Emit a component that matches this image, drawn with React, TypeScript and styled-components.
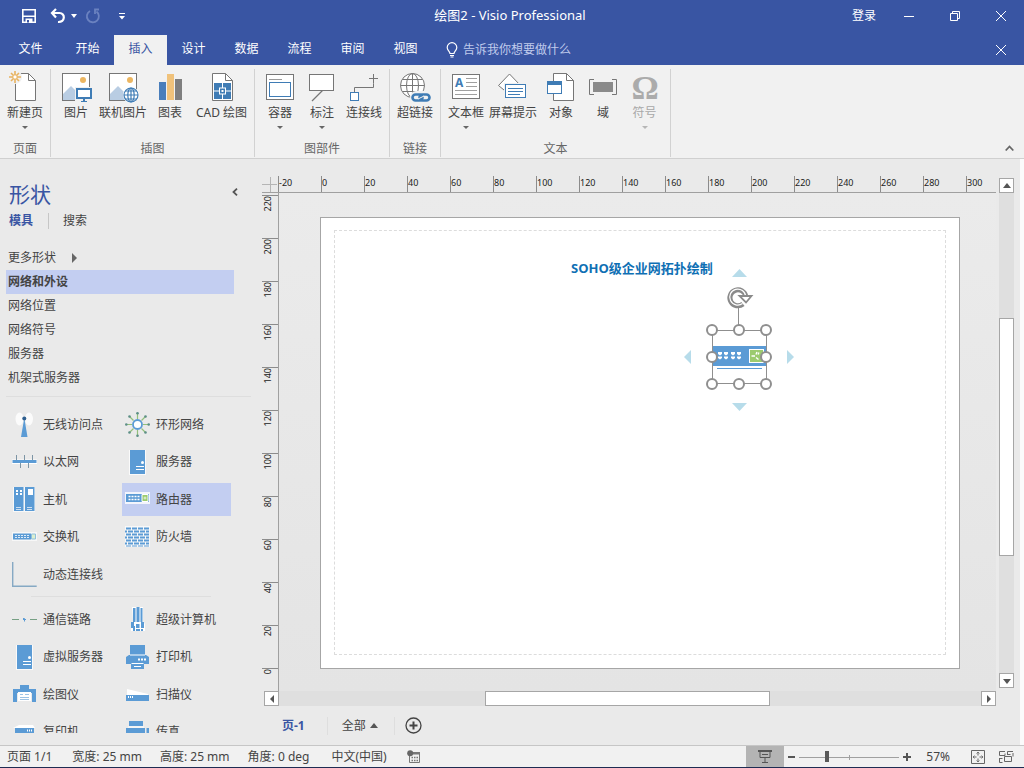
import React from "react";
import styled, { createGlobalStyle, css } from "styled-components";

const brand = "#3955a3";
const selected = "#c3cef1";
const steel = "#5b9bd5";
const outline = "#767676";
const accent = "#3f7cb5";

const GlobalStyle = createGlobalStyle`
  * { box-sizing: border-box; }
  body {
    margin: 0;
    font-family: "Noto Sans", "Noto Sans CJK SC", sans-serif;
    font-size: 12px;
    line-height: 16px;
    color: #444;
  }
  button, input {
    font: inherit;
    color: inherit;
    border: 0;
    padding: 0;
    margin: 0;
    background: none;
  }
  ul { list-style: none; margin: 0; padding: 0; }
  h1, h2 { margin: 0; font-weight: 400; }
  svg { display: block; flex: none; }
`;

const Shell = styled.div`
  display: flex;
  flex-direction: column;
  height: 100vh;
  overflow: hidden;
  background: #f1f1f1;
`;

/* ---------- title bar and tabs ---------- */

const TitleBar = styled.header`
  display: grid;
  grid-template-columns: 1fr auto 1fr;
  height: 35px;
  padding-bottom: 4px;
  background: ${brand};
  color: #fff;
  align-items: center;
`;

const QuickAccess = styled.div`
  display: flex;
  align-items: center;
  padding-left: 20px;
`;

const QuickButton = styled.button<{ $gap: number }>`
  display: flex;
  margin-right: ${(p) => p.$gap}px;
`;

const AppTitle = styled.h1`
  font-size: 13px;
  line-height: 16px;
  padding: 0 4px 2px 0;
`;

const WindowTools = styled.div`
  display: flex;
  justify-content: flex-end;
  align-items: center;
`;

const SignIn = styled.button`
  margin-right: 10px;
  line-height: 16px;
`;

const WindowButton = styled.button`
  width: 46px;
  height: 30px;
  display: flex;
  align-items: center;
  justify-content: center;
`;

const TabBar = styled.nav`
  display: flex;
  height: 30px;
  background: ${brand};
  color: #fff;
`;

const Tab = styled.button<{ $active?: boolean; $file?: boolean }>`
  width: ${(p) => (p.$file ? 61 : 53)}px;
  padding-bottom: 3px;
  ${(p) =>
    p.$active &&
    css`
      background: #f1f1f1;
      color: ${brand};
    `}
`;

const TellMe = styled.label`
  display: flex;
  align-items: center;
  gap: 5px;
  margin-left: 14px;
  flex: 1;
`;

const TellMeInput = styled.input`
  width: 160px;
  &::placeholder { color: #c0cbec; opacity: 1; }
`;

/* ---------- ribbon ---------- */

const Ribbon = styled.section`
  display: flex;
  height: 94px;
  background: #f1f1f1;
  border-bottom: 1px solid #d0d0d0;
  padding: 4px 0 1px;
`;

const RibbonGroup = styled.div`
  display: flex;
  flex-direction: column;
  justify-content: space-between;
  padding: 0 3px;
  border-right: 1px solid #d2d2d2;
`;

const RibbonButtons = styled.div`
  display: flex;
`;

const RibbonItem = styled.button<{ $w: number }>`
  width: ${(p) => p.$w}px;
  height: 64px;
  padding-top: 2px;
  display: flex;
  flex-direction: column;
  align-items: center;
  gap: 2px;
  white-space: nowrap;
  &:disabled { color: #a8a8a8; }
`;

const ItemCaret = styled.span`
  margin-top: 3px;
  border: 3px solid transparent;
  border-top-color: currentColor;
  border-bottom: 0;
  opacity: 0.8;
`;

const GroupLabel = styled.div`
  text-align: center;
  line-height: 16px;
  color: #666;
`;

const CollapseRibbon = styled.button`
  margin: auto 10px 0 auto;
  height: 14px;
  padding-bottom: 3px;
`;

/* ---------- work area ---------- */

const Work = styled.main`
  display: flex;
  flex: 1;
  min-height: 0;
  background: #eaeaea;
  border-right: 4px solid #fbfbfb;
`;

const ShapesPanel = styled.aside`
  width: 262px;
  display: flex;
  flex-direction: column;
  padding: 20px 0 12px;
  min-height: 0;
`;

const PanelHeader = styled.div`
  display: flex;
  justify-content: space-between;
  align-items: flex-start;
  height: 30px;
  padding: 0 24px 0 9px;
`;

const PanelTitle = styled.h2`
  font-size: 21px;
  line-height: 30px;
  color: ${brand};
`;

const PanelCollapse = styled.button`
  padding: 9px 0 0;
`;

const PanelTabs = styled.div`
  display: flex;
  align-items: center;
  height: 24px;
  padding-left: 9px;
  margin-bottom: 13px;
`;

const PanelTab = styled.button<{ $active?: boolean }>`
  font-weight: ${(p) => (p.$active ? 700 : 400)};
  color: ${(p) => (p.$active ? brand : "#444")};
  & + & {
    margin-left: 15px;
    padding-left: 14px;
    border-left: 1px solid #c6c6c6;
  }
`;

const StencilList = styled.ul`
  padding: 0 28px 0 6px;
`;

const Stencil = styled.button<{ $active?: boolean }>`
  display: flex;
  align-items: center;
  gap: 16px;
  width: 100%;
  height: 24px;
  padding-left: 2px;
  background: ${(p) => (p.$active ? selected : "none")};
  font-weight: ${(p) => (p.$active ? 700 : 400)};
`;

const MoreArrow = styled.span`
  border: 5px solid transparent;
  border-left: 5px solid #666;
  border-right: 0;
`;

const ShapeArea = styled.div`
  flex: 1;
  min-height: 0;
  overflow: hidden;
  margin: 6px 11px 0 6px;
  border-top: 1px solid #dedede;
  padding: 11px 0 0 3px;
`;

const ShapeGrid = styled.ul<{ $height: number }>`
  display: grid;
  grid-template-columns: 109px 109px;
  column-gap: 4px;
  grid-auto-rows: 33px;
  align-content: space-between;
  height: ${(p) => p.$height}px;
`;

const ShapeDivider = styled.hr`
  border: 0;
  height: 1px;
  background: #dedede;
  margin: 5px 40px 6px 22px;
`;

const ShapeButton = styled.button<{ $active?: boolean }>`
  display: flex;
  align-items: center;
  gap: 6px;
  width: 100%;
  height: 33px;
  padding-left: 3px;
  white-space: nowrap;
  background: ${(p) => (p.$active ? selected : "none")};
`;

const Stage = styled.section`
  flex: 1;
  min-width: 0;
  display: flex;
  flex-direction: column;
`;

const StageTop = styled.div`
  flex: 1;
  min-height: 0;
  display: flex;
`;

const Drawing = styled.div`
  flex: 1;
  min-width: 0;
  display: flex;
  flex-direction: column;
  padding-top: 17px;
`;

const RulerRow = styled.div`
  display: flex;
  height: 17px;
  border-bottom: 1px solid #a0a0a0;
`;

const Corner = styled.div`
  width: 16px;
`;

const HorizontalRuler = styled.div`
  display: flex;
  flex: 1;
  min-width: 0;
  overflow: hidden;
`;

const HTick = styled.span`
  flex: none;
  width: 43px;
  border-left: 1px solid #8c8c8c;
  font-size: 9px;
  line-height: 14px;
  color: #222;
`;

const CanvasRow = styled.div`
  flex: 1;
  min-height: 0;
  display: flex;
`;

const VerticalRuler = styled.div`
  width: 17px;
  padding-top: 2px;
  overflow: hidden;
  border-right: 1px solid #a0a0a0;
`;

const VTick = styled.div`
  height: 43px;
  border-top: 1px solid #8c8c8c;
  font-size: 9px;
  line-height: 12px;
  color: #222;
  span {
    display: block;
    writing-mode: vertical-rl;
    transform: rotate(180deg);
    width: 12px;
  }
`;

const Canvas = styled.div`
  flex: 1;
  min-width: 0;
  display: flex;
  padding: 24px 36px 22px 41px;
  background: linear-gradient(#ebebeb, #e4e4e4);
`;

const Page = styled.div`
  position: relative;
  flex: 1;
  display: flex;
  padding: 12px 13px 13px;
  background: #fff;
  border: 1px solid #a6a6a6;
`;

const PageMargin = styled.div`
  flex: 1;
  border: 1px dashed #dcdcdc;
`;

const DrawingTitle = styled.div`
  position: absolute;
  left: 250px;
  top: 42px;
  font-family: "Open Sans", "Noto Sans CJK SC", sans-serif;
  font-size: 13px;
  line-height: 16px;
  font-weight: 700;
  white-space: nowrap;
  color: #0f70b4;
`;

const PlacedShape = styled.svg`
  position: absolute;
  left: 359px;
  top: 47px;
`;

const ScrollRow = styled.div`
  display: flex;
  height: 15px;
  padding-left: 2px;
`;

const ScrollColumn = styled.div`
  display: flex;
  flex-direction: column;
  width: 24px;
  padding: 19px 6px 18px 3px;
`;

const ScrollTrack = styled.div`
  flex: 1;
  display: flex;
  flex-direction: inherit;
  background: #dfdfdf;
`;

const ScrollSpace = styled.div<{ $grow: number }>`
  flex: ${(p) => p.$grow} 0 0;
`;

const ScrollThumb = styled.div<{ $grow: number }>`
  flex: ${(p) => p.$grow} 0 0;
  background: #fff;
  border: 1px solid #a6a6a6;
`;

const ScrollButton = styled.button`
  flex: none;
  width: 15px;
  height: 15px;
  display: flex;
  align-items: center;
  justify-content: center;
  background: #fff;
  border: 1px solid #a6a6a6;
`;

const PageTabs = styled.div`
  display: flex;
  align-items: center;
  height: 39px;
  padding-left: 14px;
`;

const PageTab = styled.button<{ $active?: boolean }>`
  display: flex;
  align-items: center;
  gap: 4px;
  height: 18px;
  padding: 0 22px 0 6px;
  border-right: 1px solid #dedede;
  font-weight: ${(p) => (p.$active ? 700 : 400)};
  color: ${(p) => (p.$active ? brand : "#444")};
  & + & { padding: 0 16px 0 14px; }
`;

const AddPage = styled.button`
  margin-left: 10px;
`;

/* ---------- status bar ---------- */

const StatusBar = styled.footer`
  display: flex;
  align-items: center;
  height: 22px;
  padding-left: 7px;
  border-top: 1px solid #c6c6c6;
  background: #f1f1f1;
  white-space: nowrap;
`;

const DesktopEdge = styled.div`
  height: 1px;
  background: #1f2c52;
`;

const StatusItem = styled.span<{ $gap: number }>`
  margin-right: ${(p) => p.$gap}px;
`;

const StatusRight = styled.div`
  display: flex;
  align-items: center;
  align-self: stretch;
  margin-left: auto;
  padding-right: 10px;
`;

const PresentButton = styled.button`
  display: flex;
  align-items: center;
  justify-content: center;
  width: 38px;
  height: 100%;
  margin-right: 4px;
  background: #b4b4b4;
`;

const ZoomSlider = styled.input`
  appearance: none;
  width: 100px;
  height: 12px;
  margin: 0 4px;
  background:
    linear-gradient(#a0a0a0, #a0a0a0) 50px 4px / 1px 5px no-repeat,
    linear-gradient(#a0a0a0, #a0a0a0) 0 6px / 100% 1px no-repeat;
  &::-webkit-slider-thumb {
    appearance: none;
    width: 4px;
    height: 11px;
    background: #595959;
  }
`;

const ZoomValue = styled.button`
  margin: 0 21px 0 15px;
`;

const ViewButton = styled.button`
  & + & { margin-left: 14px; }
`;

/* ---------- ribbon drawings ---------- */

const Icon = ({ children }: { children: React.ReactNode }) => (
  <svg width="32" height="32" viewBox="0 0 32 32" fill="none" aria-hidden="true">
    {children}
  </svg>
);

const Sheet = ({ x = 6.5, w = 20 }: { x?: number; w?: number }) => (
  <>
    <path d={`M${x} 2.5h${w - 7}l7 7v20h-${w}z`} fill="#fff" stroke={outline} />
    <path d={`M${x + w - 7} 2.5v7h7`} stroke={outline} />
  </>
);

const Photo = () => (
  <>
    <rect x="2.5" y="2.5" width="27" height="27" fill="#fff" stroke={outline} />
    <circle cx="23" cy="9" r="3" fill="#ecb661" />
    <path d="M3 29v-6l8-8 9 9v5z" fill="#b9cde3" />
  </>
);

const NewPageIcon = () => (
  <Icon>
    <Sheet />
    <circle cx="6" cy="6" r="7" fill="#f1f1f1" />
    <path d="M6 0v12M0 6h12M2 2l8 8M10 2l-8 8" stroke="#e9b35f" strokeWidth="1.6" />
    <circle cx="6" cy="6" r="2.2" fill="#fff" stroke="#e9b35f" />
  </Icon>
);

const PictureIcon = () => (
  <Icon>
    <Photo />
    <path d="M15 16h17v16h-17z" fill="#f1f1f1" />
    <rect x="17" y="18" width="14" height="9" fill="#fff" stroke={accent} strokeWidth="2" />
    <path d="M24 28v2" stroke={accent} strokeWidth="2" />
    <path d="M21 30.500h6" stroke={accent} />
  </Icon>
);

const OnlinePictureIcon = () => (
  <Icon>
    <Photo />
    <circle cx="24" cy="24" r="8" fill="#fff" />
    <g stroke={accent} strokeWidth="1.2">
      <circle cx="24" cy="24" r="7" />
      <ellipse cx="24" cy="24" rx="3.2" ry="7" />
      <path d="M17 24h14M24 17v14M18.5 20h11M18.5 28h11" />
    </g>
  </Icon>
);

const ChartIcon = () => (
  <Icon>
    <path d="M5 11h7v18h-7z" fill="#4a7ebb" />
    <path d="M13 3h7v26h-7z" fill="#f0c27b" />
    <path d="M21 8h7v21h-7z" fill="#7f7f7f" />
  </Icon>
);

const CadIcon = () => (
  <Icon>
    <Sheet />
    <path d="M8 12h17v16h-17z" fill={accent} />
    <path d="M16.500 12v5M16.500 23v5M8 20h5M20 20h5" stroke="#fff" />
    <rect x="13.500" y="17" width="6" height="6" stroke="#fff" />
    <rect x="15.500" y="19" width="2" height="2" fill="#fff" />
  </Icon>
);

const ContainerIcon = () => (
  <Icon>
    <rect x="2.5" y="3.5" width="27" height="25" fill="#fff" stroke={outline} />
    <path d="M5 8.500h13" stroke="#9a9a9a" />
    <rect x="5.500" y="11.500" width="21" height="14" stroke={accent} />
  </Icon>
);

const CalloutIcon = () => (
  <Icon>
    <rect x="3.500" y="3.500" width="24" height="16" fill="#fff" stroke={outline} />
    <path d="M16.500 19.500L6 30" stroke={outline} strokeWidth="1.3" />
  </Icon>
);

const ConnectorIcon = () => (
  <Icon>
    <path d="M6.500 21v-4.500h19v-4M25.500 3v9.500M21 7.500h9" stroke={outline} />
    <rect x="2.500" y="21.500" width="8" height="8" fill="#fff" stroke={accent} />
  </Icon>
);

const HyperlinkIcon = () => (
  <Icon>
    <circle cx="13.500" cy="14.500" r="12" fill="#fff" stroke={outline} />
    <g stroke={outline}>
      <ellipse cx="13.500" cy="14.500" rx="6" ry="12" />
      <path d="M1.500 14.500h24M13.500 2.500v24M3.500 8.500h20M3.500 20.500h20" />
    </g>
    <rect x="11" y="20" width="21" height="12" rx="6" fill="#f1f1f1" />
    <g stroke={accent} strokeWidth="2.600">
      <rect x="13.500" y="23.500" width="10" height="6" rx="3" />
      <rect x="20.500" y="23.500" width="10" height="6" rx="3" />
    </g>
    <path d="M19 28l6-3" stroke="#f1f1f1" />
  </Icon>
);

const TextBoxIcon = () => (
  <Icon>
    <rect x="2.500" y="3.500" width="27" height="24" fill="#fff" stroke={outline} />
    <text x="5" y="16" fontSize="12" fontWeight="700" fill={accent}>A</text>
    <path d="M16 7.500h11M16 11.500h11M16 15.500h11M5 19.500h22M5 23.500h22" stroke="#a0a0a0" />
  </Icon>
);

const ScreenTipIcon = () => (
  <Icon>
    <path d="M1.500 14.500L12.500 3l11 11.500-11 9z" fill="#fff" stroke={outline} />
    <rect x="7" y="12" width="22" height="16" fill="#f1f1f1" />
    <rect x="8.500" y="13.500" width="20" height="13" fill="#fff" stroke={accent} />
    <path d="M11 17.500h15M11 20.500h15M11 23.500h12" stroke={accent} />
  </Icon>
);

const ObjectIcon = () => (
  <Icon>
    <Sheet x={8.5} />
    <rect x="2.500" y="10.500" width="14" height="12" fill="#fff" stroke={accent} />
    <path d="M2 10h15v4h-15z" fill={accent} />
  </Icon>
);

const FieldIcon = () => (
  <Icon>
    <path d="M7 8.500h-4.500v15h4.500M25 8.500h4.500v15h-4.500" stroke={outline} />
    <path d="M6 11h20v10h-20z" fill="#8a8a8a" />
  </Icon>
);

const SymbolIcon = () => (
  <Icon>
    <text
      x="16"
      y="28"
      fontSize="34"
      fontWeight="700"
      fontFamily="Liberation Serif, serif"
      textAnchor="middle"
      fill="#ababab"
    >
      Ω
    </text>
  </Icon>
);

/* ---------- stencil drawings ---------- */

const Tile = ({ children }: { children: React.ReactNode }) => (
  <svg width="25" height="25" viewBox="0 0 25 25" fill="none" aria-hidden="true">
    {children}
  </svg>
);

const shapeArt: Record<string, React.ReactNode> = {
  wireless: (
    <>
      <ellipse cx="7.500" cy="7" rx="4" ry="6.500" fill="#fbfbfb" />
      <ellipse cx="17" cy="7" rx="4" ry="6.500" fill="#fbfbfb" />
      <path d="M12.300 6L15.500 25h-6.500z" fill={steel} />
      <circle cx="12.300" cy="6.500" r="2" fill="#2f5f8f" />
    </>
  ),
  ring: (
    <>
      <path
        d="M12.500 1v6M12.500 18v6M1 12.500h6M18 12.500h6M4.500 4.500l4 4M16.500 16.500l4 4M4.500 20.500l4-4M16.500 8.500l4-4"
        stroke="#93c07c"
        strokeWidth="1.200"
      />
      <g fill="#5d8f87">
        <circle cx="12.500" cy="1.300" r="1.300" /><circle cx="12.500" cy="23.700" r="1.300" />
        <circle cx="1.300" cy="12.500" r="1.300" /><circle cx="23.700" cy="12.500" r="1.300" />
        <circle cx="4.500" cy="4.500" r="1.300" /><circle cx="20.500" cy="4.500" r="1.300" />
        <circle cx="4.500" cy="20.500" r="1.300" /><circle cx="20.500" cy="20.500" r="1.300" />
      </g>
      <circle cx="12.500" cy="12.500" r="4.500" fill="#fff" stroke={steel} strokeWidth="1.800" />
    </>
  ),
  ethernet: (
    <>
      <path d="M0 9.500h25v4.500h-25z" fill="#fff" />
      <path d="M4.500 5v5M12.500 5v5M20.500 5v5M8.500 13v5M16.500 13v5" stroke="#7d95a5" />
      <path d="M.5 10h24v3h-24z" fill={steel} />
    </>
  ),
  server: (
    <>
      <path d="M4 0h17v25h-17z" fill="#fafafa" />
      <path d="M5 0h15v24h-15z" fill={steel} />
      <circle cx="17.500" cy="12.500" r="1.500" fill="#fff" />
      <path d="M11 16.500h8M11 19.500h8" stroke="#fff" />
    </>
  ),
  mainframe: (
    <>
      <path d="M1 0h22v25h-22z" fill="#f8f8f8" />
      <path d="M2 0h9.500v24h-9.500zM13 0h9.500v24h-9.500z" fill={steel} />
      <path d="M4 3h2v2h-2zM8 3h2v2h-2zM4 6h2v2h-2zM8 6h2v2h-2zM16 2h5v6h-5z" fill="#fff" />
      <path d="M4 20.500h5M4 22.500h5M15 20.500h5M15 22.500h5" stroke="#cfe0f1" />
    </>
  ),
  router: (
    <>
      <path d="M0 5h25v12h-25z" fill="#fff" opacity=".8" />
      <path d="M1 7h23v8h-23z" fill={steel} />
      <path d="M3.500 9.500h11M3.500 12.500h11" stroke="#fff" strokeWidth="1.400" strokeDasharray="2 1" />
      <path d="M17 7.500h6v7h-6z" fill="#9ccb6f" stroke="#fff" />
      <path d="M18.500 11h3M20 9.500v3" stroke="#fff" strokeWidth=".7" />
    </>
  ),
  switch: (
    <>
      <path d="M0 7h25v9h-25z" fill="#fff" opacity=".6" />
      <path d="M1 8.500h18v6h-18z" fill={steel} />
      <path d="M3 10.500h14M3 12.500h14" stroke="#fff" strokeDasharray="2 1" opacity=".8" />
      <path d="M19.500 9h4v5h-4z" fill="#dcefd0" stroke="#8fc0dc" />
    </>
  ),
  firewall: (
    <>
      <path d="M0 1h25v21h-25z" fill="#f8f8f8" />
      <path d="M1 3.500h24M1 9.500h24M1 15.500h24" stroke={steel} strokeWidth="2" strokeDasharray="5 1" />
      <path d="M0 6.500h24M0 12.500h24M0 18.500h24" stroke={steel} strokeWidth="2" strokeDasharray="2 1 5 1 5 1 5 1 3" />
      <path d="M1 21h24" stroke={steel} strokeDasharray="5 1" />
    </>
  ),
  connector: <path d="M.7 0v24.300h24" stroke="#86a9c4" strokeWidth="1.400" />,
  link: (
    <>
      <path d="M0 12.500h7M18 12.500h7" stroke="#76a084" />
      <path d="M11 11.500h1.500v3M11 12.500h3" stroke={steel} />
    </>
  ),
  super: (
    <>
      <path d="M7 0h11v14l2 3v7h-14v-7l2-3z" fill="#fff" />
      <path d="M8 1h2.500v14h-2.500zM11.500 0h3v15h-3zM15.500 1h2v14h-2z" fill={steel} />
      <path d="M6 15h3v6h-3zM16 15h3v6h-3zM8 19h2v5h-2zM11 17h3.500v4h-3.500zM11 22h4v2h-4zM16 22h2v2h-2z" fill={steel} />
    </>
  ),
  printer: (
    <>
      <path d="M5 0h15v10h-15zM1 12l3-2h17l3 2v7h-23zM6 19h13v5h-13z" fill={steel} />
      <path d="M5 10h15M6.500 18.500h12" stroke="#fff" />
      <path d="M13 14.500h8" stroke="#fff" strokeWidth="2" strokeDasharray="2 1" />
      <path d="M9 21.500h7" stroke="#fff" />
    </>
  ),
  plotter: (
    <>
      <path d="M8 3h9v4h-9zM1 7h23v13h-4v-9h-15v9h-4z" fill={steel} />
      <path d="M6 10h13v9h-13z" fill="#fff" />
      <path d="M8 12.500h3M8 15.500h9M8 17.500h9M13 12.500h4" stroke="#9cc3e6" />
    </>
  ),
  scanner: (
    <>
      <path d="M2 7l21 5v1h-21z" fill="#fff" />
      <path d="M1 13h23v6h-23z" fill={steel} />
      <path d="M3 15h5" stroke="#fff" strokeWidth="2" strokeDasharray="1 1" />
    </>
  ),
  copier: (
    <>
      <path d="M1 8l6-3h14l2 3z" fill="#fff" />
      <path d="M3 8h19v12h-19z" fill={steel} />
      <path d="M15 10.500h6" stroke="#fff" strokeWidth="2" strokeDasharray="1 1" />
    </>
  ),
  fax: (
    <>
      <path d="M4 1h14v5h-14zM1 8h19v12h-19zM21.500 8h2.500v12h-2.500z" fill={steel} />
      <path d="M3 7h16" stroke="#fff" />
    </>
  ),
};

/* ---------- data ---------- */

const tabs = ["文件", "开始", "插入", "设计", "数据", "流程", "审阅", "视图"];

type RibbonEntry = {
  label: string;
  w: number;
  icon: React.ReactNode;
  menu?: boolean;
  disabled?: boolean;
};

const ribbon: { label: string; items: RibbonEntry[] }[] = [
  { label: "页面", items: [{ label: "新建页", w: 44, icon: <NewPageIcon />, menu: true }] },
  {
    label: "插图",
    items: [
      { label: "图片", w: 44, icon: <PictureIcon /> },
      { label: "联机图片", w: 50, icon: <OnlinePictureIcon /> },
      { label: "图表", w: 44, icon: <ChartIcon /> },
      { label: "CAD 绘图", w: 59, icon: <CadIcon /> },
    ],
  },
  {
    label: "图部件",
    items: [
      { label: "容器", w: 44, icon: <ContainerIcon />, menu: true },
      { label: "标注", w: 40, icon: <CalloutIcon />, menu: true },
      { label: "连接线", w: 44, icon: <ConnectorIcon /> },
    ],
  },
  { label: "链接", items: [{ label: "超链接", w: 44, icon: <HyperlinkIcon /> }] },
  {
    label: "文本",
    items: [
      { label: "文本框", w: 44, icon: <TextBoxIcon />, menu: true },
      { label: "屏幕提示", w: 50, icon: <ScreenTipIcon /> },
      { label: "对象", w: 46, icon: <ObjectIcon /> },
      { label: "域", w: 38, icon: <FieldIcon /> },
      { label: "符号", w: 45, icon: <SymbolIcon />, menu: true, disabled: true },
    ],
  },
];

const stencils = ["网络和外设", "网络位置", "网络符号", "服务器", "机架式服务器"];

const mainShapes = [
  ["无线访问点", "wireless"],
  ["环形网络", "ring"],
  ["以太网", "ethernet"],
  ["服务器", "server"],
  ["主机", "mainframe"],
  ["路由器", "router"],
  ["交换机", "switch"],
  ["防火墙", "firewall"],
  ["动态连接线", "connector"],
];

const moreShapes = [
  ["通信链路", "link"],
  ["超级计算机", "super"],
  ["虚拟服务器", "server"],
  ["打印机", "printer"],
  ["绘图仪", "plotter"],
  ["扫描仪", "scanner"],
  ["复印机", "copier"],
  ["传真", "fax"],
];

const hMarks = Array.from({ length: 17 }, (_, i) => i * 20 - 20);
const vMarks = Array.from({ length: 12 }, (_, i) => 220 - i * 20);

const arrows = {
  up: "M0 6L4 1l4 5z",
  down: "M0 2h8L4 7z",
  left: "M6 0v8L2 4z",
  right: "M2 0v8l4-4z",
};

const Arrow = ({ dir }: { dir: keyof typeof arrows }) => (
  <svg width="8" height="8" viewBox="0 0 8 8" aria-hidden="true">
    <path d={arrows[dir]} fill="#555" />
  </svg>
);

const ShapeItems = ({ items }: { items: string[][] }) => (
  <>
    {items.map(([name, art]) => (
      <li key={name}>
        <ShapeButton $active={art === "router"}>
          <Tile>{shapeArt[art]}</Tile>
          {name}
        </ShapeButton>
      </li>
    ))}
  </>
);

const CloseGlyph = () => (
  <svg width="12" height="12" viewBox="0 0 12 12" stroke="#fff" aria-hidden="true">
    <path d="M1 1l10 10M11 1L1 11" />
  </svg>
);

const SelectedRouter = () => (
  <PlacedShape width="120" height="150" viewBox="680 265 120 150" fill="none" role="img" aria-label="路由器">
    <g fill="#b7dcea">
      <path d="M732 277h15l-7.500-8z" />
      <path d="M732 403h15l-7.500 8z" />
      <path d="M691 350v14l-7-7z" />
      <path d="M787 350v14l7-7z" />
    </g>
    <path d="M712 346h55v20h-55z" fill={steel} />
    <path d="M717 368.500h45" stroke={steel} />
    <g fill="#fff">
      {[718, 724, 731, 737].map((x) => (
        <React.Fragment key={x}>
          <path d={`M${x} 352h4v2l-2 1.500-2-1.500z`} />
          <path d={`M${x} 356.500h4v1.500l-2 1.500-2-1.500z`} />
        </React.Fragment>
      ))}
    </g>
    <rect x="749.500" y="349.500" width="14" height="13" fill="#9ccb6f" stroke="#fff" />
    <path d="M751.500 356h3.500M757 352l-1 2.500M756 357.500l2.500 2M759 352.500l-1 2" stroke="#fff" strokeWidth="1.400" />
    <g stroke="#8f8f8f">
      <rect x="712.500" y="330.500" width="54" height="53" />
      <path d="M738.500 306v19" />
    </g>
    <g fill="#fff" stroke="#8f8f8f" strokeWidth="2">
      {[
        [712, 330], [739, 330], [766, 330],
        [712, 357], [766, 357],
        [712, 384], [739, 384], [766, 384],
      ].map(([x, y]) => (
        <circle key={`${x}-${y}`} cx={x} cy={y} r="5" />
      ))}
    </g>
    <path d="M743 304a8 8 0 1 1 2.800-7.500" stroke="#8a8a8a" strokeWidth="5" />
    <path d="M742.500 303.500a8 8 0 1 1 3.200-7" stroke="#fff" strokeWidth="1.200" />
    <path d="M739.500 296h12l-5.500 6.500z" fill="#fff" stroke="#8a8a8a" strokeWidth="1.800" />
  </PlacedShape>
);

export default function App() {
  return (
    <Shell>
      <GlobalStyle />
      <TitleBar>
        <QuickAccess>
          <QuickButton $gap={12} aria-label="保存">
            <svg width="18" height="18" viewBox="0 0 18 18" fill="none">
              <path d="M2.800 2.800h12.400v12.400h-12.400z" stroke="#fff" strokeWidth="1.600" />
              <path d="M3 8.500h12v1.500h-12z" fill="#fff" />
              <path d="M5.500 11.500h7v4h-7z" fill="#fff" />
              <path d="M7 13h2v2.500h-2z" fill={brand} />
            </svg>
          </QuickButton>
          <QuickButton $gap={5} aria-label="撤消">
            <svg width="16" height="16" viewBox="0 0 16 16" fill="none" stroke="#fff" strokeWidth="2.200">
              <path d="M6 1L2 5l4 4.500" />
              <path d="M2.500 5h7c6 0 6 9.500-1.500 9" />
            </svg>
          </QuickButton>
          <QuickButton $gap={8} aria-label="撤消选项">
            <svg width="6" height="4" viewBox="0 0 6 4"><path d="M0 0h6L3 4z" fill="#fff" /></svg>
          </QuickButton>
          <QuickButton $gap={17} aria-label="重复">
            <svg width="16" height="16" viewBox="0 0 16 16" fill="none" stroke="#6b82c0" strokeWidth="1.800">
              <path d="M5 3a6 6 0 1 0 6.500.5" />
              <path d="M14 1.500h-4v4.500" />
            </svg>
          </QuickButton>
          <QuickButton $gap={0} aria-label="自定义快速访问工具栏">
            <svg width="8" height="8" viewBox="0 0 8 8" fill="#fff">
              <path d="M1 1h6v1h-6zM1 4h6L4 7.500z" />
            </svg>
          </QuickButton>
        </QuickAccess>
        <AppTitle>绘图2 - Visio Professional</AppTitle>
        <WindowTools>
          <SignIn>登录</SignIn>
          <WindowButton aria-label="最小化">
            <svg width="12" height="12" viewBox="0 0 12 12" stroke="#fff"><path d="M1 6.500h10" /></svg>
          </WindowButton>
          <WindowButton aria-label="还原">
            <svg width="12" height="12" viewBox="0 0 12 12" stroke="#fff" fill="none">
              <path d="M1.500 3.500h7v7h-7zM3.500 3.500v-2h7v7h-2" />
            </svg>
          </WindowButton>
          <WindowButton aria-label="关闭"><CloseGlyph /></WindowButton>
        </WindowTools>
      </TitleBar>

      <TabBar>
        {tabs.map((t) => (
          <Tab key={t} $file={t === "文件"} $active={t === "插入"}>{t}</Tab>
        ))}
        <TellMe>
          <svg width="12" height="16" viewBox="0 0 12 16" fill="none" stroke="#fff" strokeWidth="1.200">
            <path d="M4 11.500c0-2-2.800-3-2.800-6a4.800 4.800 0 0 1 9.600 0c0 3-2.800 4-2.800 6z" />
            <path d="M4 13.500h4M4.500 15h3" />
          </svg>
          <TellMeInput type="text" placeholder="告诉我你想要做什么" aria-label="告诉我你想要做什么" />
        </TellMe>
        <WindowButton aria-label="关闭文档"><CloseGlyph /></WindowButton>
      </TabBar>

      <Ribbon>
        {ribbon.map((g) => (
          <RibbonGroup key={g.label}>
            <RibbonButtons>
              {g.items.map((it) => (
                <RibbonItem key={it.label} $w={it.w} disabled={it.disabled}>
                  {it.icon}
                  {it.label}
                  {it.menu && <ItemCaret />}
                </RibbonItem>
              ))}
            </RibbonButtons>
            <GroupLabel>{g.label}</GroupLabel>
          </RibbonGroup>
        ))}
        <CollapseRibbon aria-label="折叠功能区">
          <svg width="9" height="7" viewBox="0 0 9 7" fill="none" stroke="#666" strokeWidth="1.800">
            <path d="M.7 5.500l3.800-4 3.800 4" />
          </svg>
        </CollapseRibbon>
      </Ribbon>

      <Work>
        <ShapesPanel>
          <PanelHeader>
            <PanelTitle>形状</PanelTitle>
            <PanelCollapse aria-label="最小化形状窗口">
              <svg width="6" height="8" viewBox="0 0 6 8" fill="none" stroke="#555" strokeWidth="1.800">
                <path d="M5 .7L1.500 4 5 7.300" />
              </svg>
            </PanelCollapse>
          </PanelHeader>
          <PanelTabs>
            <PanelTab $active>模具</PanelTab>
            <PanelTab>搜索</PanelTab>
          </PanelTabs>
          <StencilList>
            <li><Stencil>更多形状<MoreArrow /></Stencil></li>
            {stencils.map((s, i) => (
              <li key={s}><Stencil $active={i === 0}>{s}</Stencil></li>
            ))}
          </StencilList>
          <ShapeArea>
            <ShapeGrid $height={183}><ShapeItems items={mainShapes} /></ShapeGrid>
            <ShapeDivider />
            <ShapeGrid $height={146}><ShapeItems items={moreShapes} /></ShapeGrid>
          </ShapeArea>
        </ShapesPanel>

        <Stage>
          <StageTop>
            <Drawing>
              <RulerRow>
                <Corner>
                  <svg width="16" height="16" viewBox="0 0 16 16" stroke="#b5b5b5">
                    <path d="M0 8.500h15M8.500 1v15" />
                  </svg>
                </Corner>
                <HorizontalRuler>
                  {hMarks.map((m) => <HTick key={m}>{m}</HTick>)}
                </HorizontalRuler>
              </RulerRow>
              <CanvasRow>
                <VerticalRuler>
                  {vMarks.map((m) => <VTick key={m}><span>{m}</span></VTick>)}
                </VerticalRuler>
                <Canvas>
                  <Page>
                    <PageMargin />
                    <DrawingTitle>SOHO级企业网拓扑绘制</DrawingTitle>
                    <SelectedRouter />
                  </Page>
                </Canvas>
              </CanvasRow>
              <ScrollRow>
                <ScrollButton aria-label="向左滚动"><Arrow dir="left" /></ScrollButton>
                <ScrollTrack>
                  <ScrollSpace $grow={207} />
                  <ScrollThumb $grow={283} />
                  <ScrollSpace $grow={212} />
                </ScrollTrack>
                <ScrollButton aria-label="向右滚动"><Arrow dir="right" /></ScrollButton>
              </ScrollRow>
            </Drawing>
            <ScrollColumn>
              <ScrollButton aria-label="向上滚动"><Arrow dir="up" /></ScrollButton>
              <ScrollTrack>
                <ScrollSpace $grow={126} />
                <ScrollThumb $grow={238} />
                <ScrollSpace $grow={118} />
              </ScrollTrack>
              <ScrollButton aria-label="向下滚动"><Arrow dir="down" /></ScrollButton>
            </ScrollColumn>
          </StageTop>
          <PageTabs>
            <PageTab $active>页-1</PageTab>
            <PageTab>全部<Arrow dir="up" /></PageTab>
            <AddPage aria-label="插入页">
              <svg width="17" height="17" viewBox="0 0 17 17" fill="none" stroke="#444">
                <circle cx="8.500" cy="8.500" r="7.500" strokeWidth="1.300" />
                <path d="M8.500 4.500v8M4.500 8.500h8" strokeWidth="2" />
              </svg>
            </AddPage>
          </PageTabs>
        </Stage>
      </Work>

      <StatusBar>
        <StatusItem $gap={20}>页面 1/1</StatusItem>
        <StatusItem $gap={18}>宽度: 25 mm</StatusItem>
        <StatusItem $gap={18}>高度: 25 mm</StatusItem>
        <StatusItem $gap={22}>角度: 0 deg</StatusItem>
        <StatusItem $gap={20}>中文(中国)</StatusItem>
        <button aria-label="录制宏">
          <svg width="14" height="14" viewBox="0 0 14 14" fill="none">
            <path d="M2.500 6v6.500h10v-10h-6" stroke="#777" />
            <path d="M6 2h7v2.500h-7z" fill="#777" />
            <path d="M4.500 7.500h7M4.500 10.500h7" stroke="#777" strokeWidth="1.500" strokeDasharray="1.500 1" />
            <circle cx="3.200" cy="3.200" r="3" fill="#666" />
          </svg>
        </button>
        <StatusRight>
          <PresentButton aria-label="演示模式">
            <svg width="14" height="13" viewBox="0 0 14 13" fill="none" stroke="#555">
              <path d="M0 1h14" strokeWidth="2" />
              <path d="M2 2v5.500h10v-5.500M4 4.500h6M7 8v4M4 12.500h6" />
            </svg>
          </PresentButton>
          <button aria-label="缩小">
            <svg width="7" height="8" viewBox="0 0 7 8"><path d="M0 3h7v2h-7z" fill="#555" /></svg>
          </button>
          <ZoomSlider type="range" min={0} max={100} defaultValue={27} aria-label="缩放" />
          <button aria-label="放大">
            <svg width="8" height="8" viewBox="0 0 8 8"><path d="M3 0h2v3h3v2h-3v3h-2v-3h-3v-2h3z" fill="#555" /></svg>
          </button>
          <ZoomValue>57%</ZoomValue>
          <ViewButton aria-label="适应窗口">
            <svg width="14" height="14" viewBox="0 0 14 14" fill="none" stroke="#666">
              <path d="M.5 .5h13v13h-13z" />
              <path d="M7 2v3.500M7 8.500v3.500M2 7h3.500M8.500 7h3.500" />
              <path d="M5.500 3.500L7 2l1.500 1.500M5.500 10.500L7 12l1.500-1.500M3.500 5.500L2 7l1.500 1.500M10.500 5.500L12 7l-1.500 1.500" strokeWidth=".8" />
            </svg>
          </ViewButton>
          <ViewButton aria-label="切换窗口">
            <svg width="15" height="14" viewBox="0 0 15 14" fill="none" stroke="#666">
              <path d="M6 1.500h-5.500v4h5.500v-2M8.500 5v-3.500h5.500M8.500 4.500h3M.5 8v4.500h3M.5 8.500h3" />
              <path d="M5.500 6.500h7v5h-7z" />
              <path d="M14 3v3.500" />
            </svg>
          </ViewButton>
        </StatusRight>
      </StatusBar>
      <DesktopEdge />
    </Shell>
  );
}
